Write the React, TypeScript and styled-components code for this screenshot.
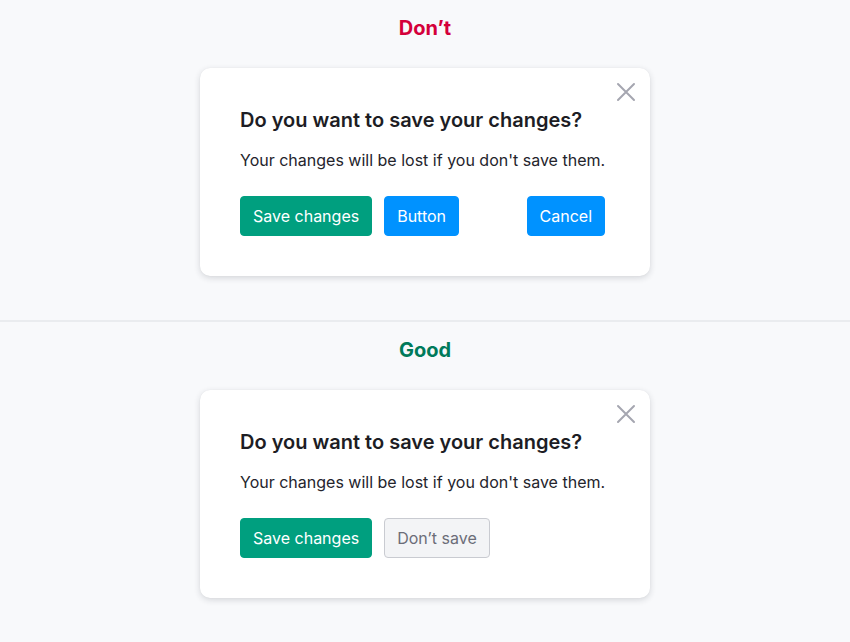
import React from 'react';
import styled, { createGlobalStyle } from 'styled-components';

const GlobalStyle = createGlobalStyle`
    html, body {
        margin: 0;
        padding: 0;
        background: #f8f9fb;
        font-family: Inter, "Noto Sans", sans-serif;
        -webkit-font-smoothing: antialiased;
    }
`;

const Page = styled.div`
    display: flex;
    flex-direction: column;
    width: 100%;
    min-height: 642px;
    background: #f8f9fb;
`;

const Section = styled.section<{ $divider?: boolean }>`
    display: flex;
    flex-direction: column;
    align-items: center;
    gap: 28px;
    padding: 16px 0 44px;
    border-top: ${p => (p.$divider ? '2px solid #eaecef' : 'none')};
    box-sizing: border-box;
`;

const Heading = styled.h2<{ $tone: 'bad' | 'good' }>`
    margin: 0;
    font-size: 20px;
    line-height: 24px;
    font-weight: 700;
    color: ${p => (p.$tone === 'bad' ? '#d4003a' : '#007a5a')};
`;

const Card = styled.div`
    position: relative;
    display: flex;
    flex-direction: column;
    width: 450px;
    box-sizing: border-box;
    padding: 40px 45px 40px 40px;
    background: #ffffff;
    border-radius: 10px;
    box-shadow: 0 2px 6px rgba(30, 35, 50, 0.16), 0 0 1px rgba(30, 35, 50, 0.08);
`;

const CloseButton = styled.button`
    position: absolute;
    top: 14px;
    right: 14px;
    width: 20px;
    height: 20px;
    padding: 0;
    border: none;
    background: none;
    display: flex;
    align-items: center;
    justify-content: center;
    cursor: pointer;
`;

const Title = styled.h3`
    margin: 0;
    font-size: 20px;
    line-height: 24px;
    font-weight: 600;
    color: #1d1d24;
    white-space: nowrap;
`;

const Text = styled.p`
    margin: 16px 0 0;
    font-size: 16px;
    line-height: 24px;
    color: #24242c;
    white-space: nowrap;
`;

const Actions = styled.div`
    display: flex;
    gap: 12px;
    margin-top: 24px;
`;

const Button = styled.button<{ $variant: 'primary' | 'info' | 'secondary'; $push?: boolean }>`
    height: 40px;
    padding: 0 12px;
    border-radius: 4px;
    font-family: Inter, "Noto Sans", sans-serif;
    font-size: 16px;
    font-weight: 400;
    cursor: pointer;
    margin-left: ${p => (p.$push ? 'auto' : '0')};
    border: 1px solid
        ${p =>
            p.$variant === 'primary' ? '#009f7f' : p.$variant === 'info' ? '#0092ff' : '#c9cbd1'};
    background: ${p =>
        p.$variant === 'primary' ? '#009f7f' : p.$variant === 'info' ? '#0092ff' : '#f3f4f6'};
    color: ${p => (p.$variant === 'secondary' ? '#6b6d78' : '#ffffff')};
`;

const CloseIcon = () => (
    <svg width="20" height="20" viewBox="0 0 20 20" fill="none">
        <path d="M2 2L18 18M18 2L2 18" stroke="#a5a6b0" strokeWidth="2" strokeLinecap="round" />
    </svg>
);

type DialogProps = {
    children: React.ReactNode;
};

const Dialog = ({ children }: DialogProps) => (
    <Card>
        <CloseButton aria-label="Close">
            <CloseIcon />
        </CloseButton>
        <Title>Do you want to save your changes?</Title>
        <Text>Your changes will be lost if you don't save them.</Text>
        <Actions>{children}</Actions>
    </Card>
);

const App = () => {
    return (
        <>
            <GlobalStyle />
            <Page>
                <Section>
                    <Heading $tone="bad">Don’t</Heading>
                    <Dialog>
                        <Button $variant="primary">Save changes</Button>
                        <Button $variant="info">Button</Button>
                        <Button $variant="info" $push>
                            Cancel
                        </Button>
                    </Dialog>
                </Section>
                <Section $divider>
                    <Heading $tone="good">Good</Heading>
                    <Dialog>
                        <Button $variant="primary">Save changes</Button>
                        <Button $variant="secondary">Don’t save</Button>
                    </Dialog>
                </Section>
            </Page>
        </>
    );
};

export default App;
